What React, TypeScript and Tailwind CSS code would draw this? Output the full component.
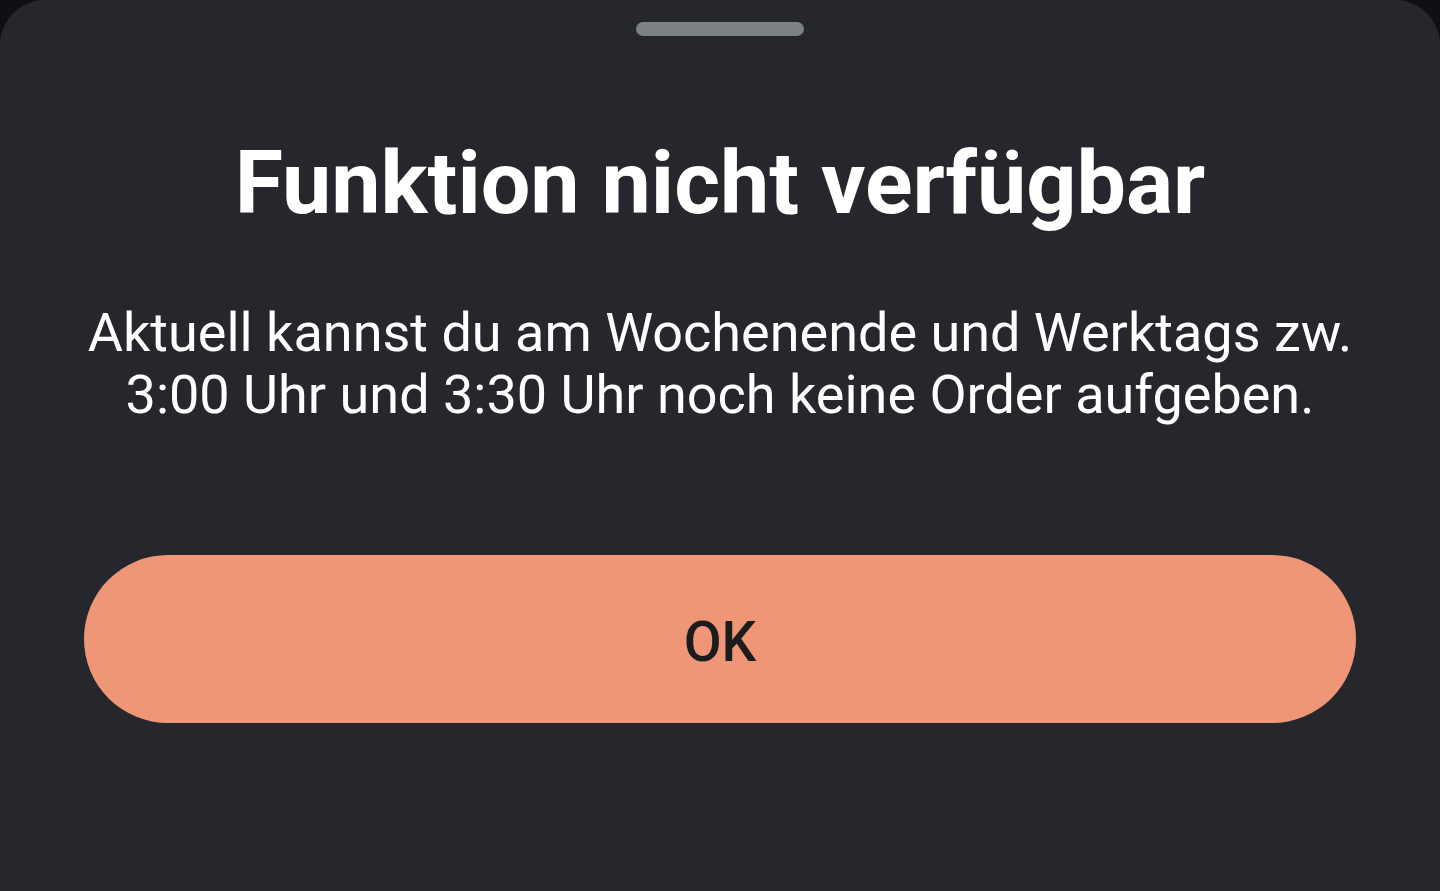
export default function App() {
  return (
    <div className="w-[1440px] h-[891px] bg-[#0f1013] overflow-hidden" style={{ fontFamily: "Roboto, 'Noto Sans', sans-serif" }}>
      <div className="w-full h-full bg-[#25272c] rounded-t-[45px] flex flex-col items-center">
        <div className="mt-[22px] w-[168px] h-[14px] rounded-full bg-[#7d8085]" />
        <h1 className="mt-[95px] text-[88px] leading-[104px] font-bold text-white text-center">Funktion nicht verfügbar</h1>
        <p className="mt-[67px] text-[54px] leading-[62px] text-white text-center whitespace-nowrap">
          Aktuell kannst du am Wochenende und Werktags zw.<br />3:00 Uhr und 3:30 Uhr noch keine Order aufgeben.
        </p>
        <button className="mt-[129px] w-[1272px] h-[168px] pt-[6px] rounded-full bg-[#ef9677] text-[#1c1c1e] text-[55px] leading-[64px] font-medium">OK</button>
      </div>
    </div>
  );
}
